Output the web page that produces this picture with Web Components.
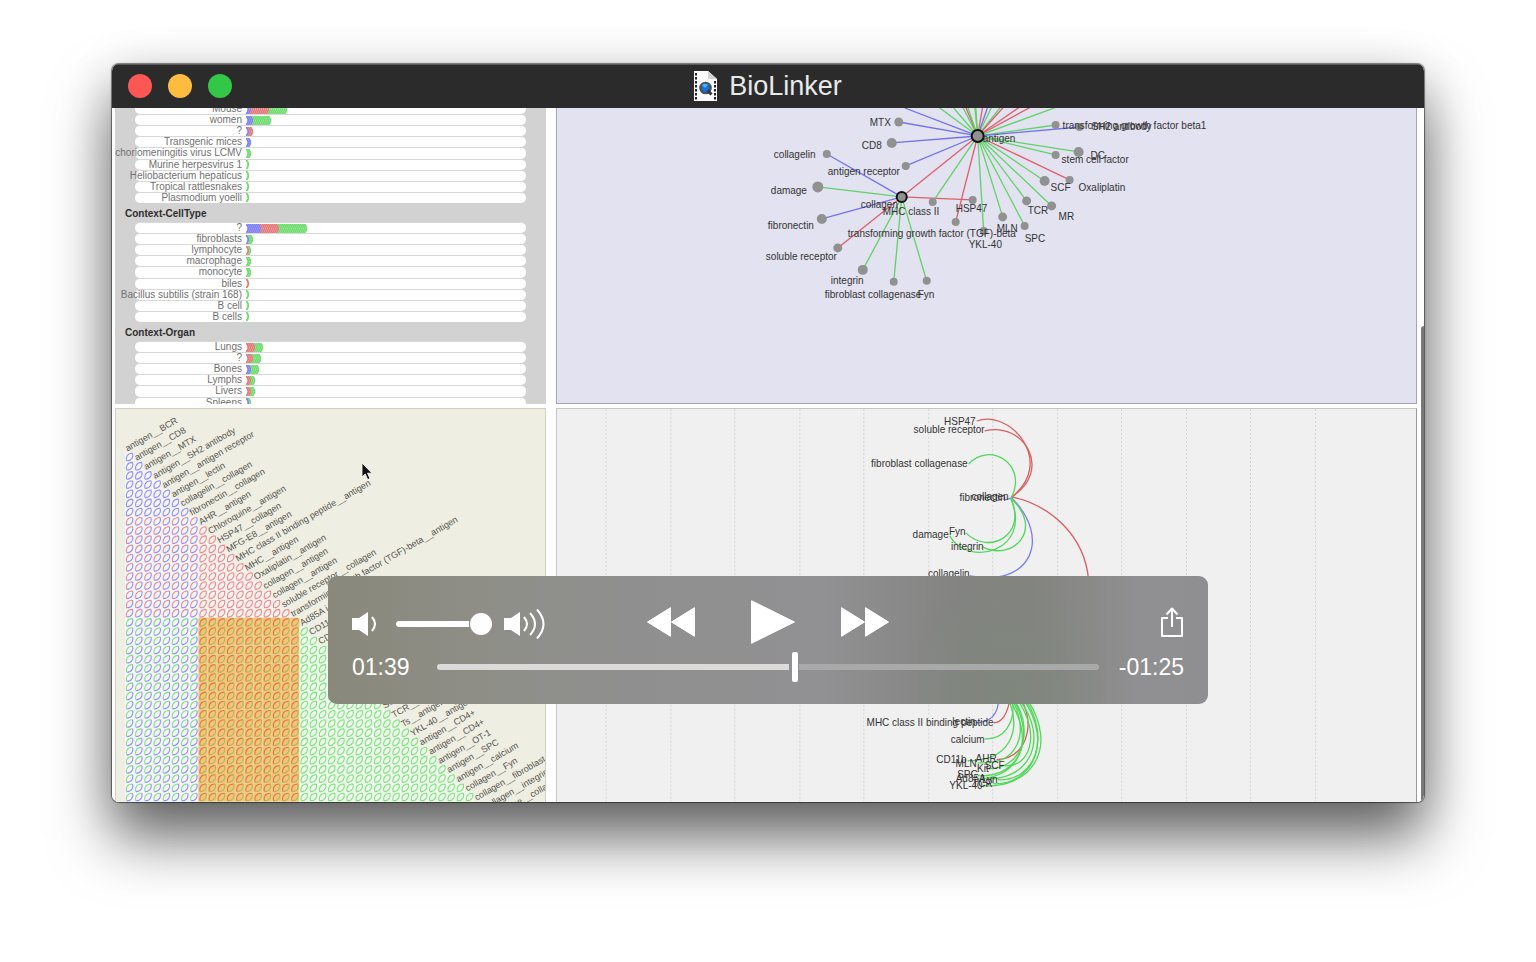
<!DOCTYPE html>
<html lang="en">
<head>
<meta charset="utf-8">
<title>BioLinker</title>
<style>
  html, body { margin: 0; background: #fff; }
  body { font-family: "Liberation Sans", Arial, sans-serif; padding: 64px 112px 160px; }
</style>
</head>
<body>
<player-window heading="BioLinker">
  <context-bars></context-bars>
  <relation-network></relation-network>
  <relation-matrix></relation-matrix>
  <arc-diagram></arc-diagram>
  <playback-bar slot="controls"></playback-bar>
</player-window>

<template id="window-template">
  <style>
    :host { display: block; border-radius: 7px; box-shadow: 0 0 1px 1px rgba(0,0,0,.5), 0 36px 60px rgba(0,0,0,.58), 0 8px 50px rgba(0,0,0,.14); }
    .frame { border-radius: 7px; overflow: hidden; background: #fff; }
    header { display: grid; grid-template-columns: 1fr auto 1fr; align-items: center; height: 44px; padding: 0 16px; background: #2b2b2c; box-shadow: inset 0 1px #5a5a5b; }
    .lights { display: flex; gap: 16px; }
    .lights button { width: 24px; height: 24px; padding: 0; border: 0; border-radius: 50%; }
    .close { background: #fc5753; } .min { background: #fdbc40; } .max { background: #33c748; }
    .title { display: flex; align-items: center; gap: 12px; }
    h1 { margin: 0; font-size: 27px; line-height: 32px; font-weight: 400; color: #e9e9ea; }
    main { position: relative; }
    .panels { position: relative; display: grid; grid-template-columns: 1fr 2fr; grid-template-rows: 296px 394px; gap: 4px 10px; padding: 0 7px 0 3px; }
    .thumb { position: absolute; right: 0; top: 218px; bottom: 0; width: 3px; border-radius: 3px 0 0 0; background: #787878; }
    ::slotted([slot=controls]) { position: absolute; left: 216px; right: 216px; bottom: 98px; }
  </style>
  <div class="frame">
    <header>
      <div class="lights">
        <button class="close" aria-label="Close"></button>
        <button class="min" aria-label="Minimize"></button>
        <button class="max" aria-label="Full screen"></button>
      </div>
      <div class="title">
        <svg width="23" height="30" viewBox="0 0 23 30" aria-hidden="true">
          <path d="M0 0H14L23 8V30H0Z" fill="#fbfbfb"/>
          <path d="M14 0V8H23Z" fill="#d4d4d4"/>
          <path d="M2 2V29" stroke="#222" stroke-width="2" stroke-dasharray="2.4 1.6"/>
          <path d="M21 10V29" stroke="#222" stroke-width="2" stroke-dasharray="2.4 1.6"/>
          <circle cx="11.5" cy="17" r="5" fill="#1272e0" stroke="#4b515b" stroke-width="2.6"/>
          <path d="M8 14Q11 11.500 14 14L11 17Z" fill="#49b4ff"/>
          <path d="M13.500 19.500L17.500 23.500" stroke="#33363c" stroke-width="3"/>
        </svg>
        <h1></h1>
      </div>
    </header>
    <main>
      <div class="panels"><slot></slot><div class="thumb"></div></div>
      <slot name="controls"></slot>
    </main>
  </div>
</template>

<template id="context-template">
  <style>
    :host { display: block; overflow: hidden; background: #d2d2d2; color: #717171; font-size: 10px; }
    .list { margin-top: -5px; }
    h2 { margin: 0; padding: 2px 0 0 10px; font-size: 10px; line-height: 17px; color: #2e2e2e; }
    .group { display: grid; grid-template-columns: minmax(0, 1fr); grid-auto-rows: 1fr; height: 100px; margin: 0 20px; }
    .row { display: flex; align-items: center; gap: 4px; box-sizing: border-box; min-height: 0; border: solid #d8d8d8; border-width: 1px 0 0; border-radius: 5px; background: #fff; }
    .row span { display: flex; justify-content: flex-end; flex: none; width: 107px; white-space: nowrap; line-height: 10px; }
    svg { display: block; flex: 1; width: 0; height: 9px; min-width: 0; }
  </style>
  <div class="list"></div>
</template>

<template id="playback-template">
  <style>
    :host { display: block; }
    .bar { display: flex; flex-direction: column; gap: 8px; height: 128px; box-sizing: border-box; padding: 24px 24px 22px; border-radius: 9px; color: #fff;
      background: radial-gradient(ellipse 110px 120px at 77% 90%, rgba(126,136,124,.8), rgba(126,130,124,0)), linear-gradient(90deg, #89887b 0%, #8f8f89 20%, #8f8f8f 34%, #919193 56%, #838381 72%, #838480 80%, #908f91 92%, #8f8e90 100%); }
    .row { display: grid; grid-template-columns: 1fr auto 1fr; align-items: center; height: 44px; }
    .volume { display: flex; align-items: center; gap: 12px; padding-top: 4px; }
    .volume label { display: flex; width: 32px; }
    .transport { display: flex; align-items: center; gap: 45px; }
    button { display: flex; padding: 0; border: 0; background: none; color: inherit; }
    .share { justify-self: end; }
    svg { display: block; }
    .seek { display: flex; align-items: center; height: 30px; }
    time { font-size: 23px; line-height: 30px; }
    input { appearance: none; margin: 0; background: none; }
    #volume { width: 96px; height: 24px; }
    #volume::-webkit-slider-runnable-track { height: 6px; border-radius: 3px; background: linear-gradient(90deg, #fff 73px, transparent 73px); }
    #volume::-webkit-slider-thumb { appearance: none; width: 22px; height: 22px; margin-top: -8px; border-radius: 50%; background: #fff; }
    #seek { flex: 1; min-width: 0; height: 30px; margin: 0 20px 0 27px; }
    #seek::-webkit-slider-runnable-track { height: 6px; border-radius: 3px; background: linear-gradient(90deg, #dcdbd9 calc(54% - 5px), transparent calc(54% - 5px), transparent calc(54% + 5px), #a9a9a9 calc(54% + 5px)); }
    #seek::-webkit-slider-thumb { appearance: none; width: 6px; height: 30px; margin-top: -12px; border-radius: 2px; background: #fff; }
  </style>
  <div class="bar">
    <div class="row">
      <div class="volume">
        <label for="volume" aria-label="Volume"><svg width="32" height="30" viewBox="0 0 32 30" fill="#fff" aria-hidden="true"><path d="M0 9H7L16 3V27L7 21H0Z"/><path d="M20 8Q26 15 20 22" fill="none" stroke="#fff" stroke-width="2"/></svg></label>
        <input id="volume" type="range" min="0" max="100" value="100">
        <svg width="42" height="30" viewBox="0 0 42 30" fill="#fff" aria-hidden="true"><path d="M0 9H7L16 3V27L7 21H0Z"/><g fill="none" stroke="#fff" stroke-width="2"><path d="M20 8Q26 15 20 22"/><path d="M26 4Q36 15 26 26"/><path d="M33 0.500Q46 15 33 29.500"/></g></svg>
      </div>
      <div class="transport">
        <button aria-label="Rewind"><svg width="48" height="30" viewBox="0 0 48 30" fill="#fff" stroke="#fff" stroke-linejoin="round"><path d="M.5 15L23.500 .7V29.300ZM24.500 15L47.500 .7V29.300Z"/></svg></button>
        <button aria-label="Play"><svg width="56" height="44" viewBox="0 0 56 44" fill="#fff" stroke="#fff" stroke-linejoin="round"><path d="M11.500 .7L54.500 22L11.500 43.300Z"/></svg></button>
        <button aria-label="Fast forward"><svg width="48" height="30" viewBox="0 0 48 30" fill="#fff" stroke="#fff" stroke-linejoin="round"><path d="M.5 .7L23.500 15L.5 29.300ZM24.500 .7L47.500 15L24.500 29.300Z"/></svg></button>
      </div>
      <button class="share" aria-label="Share"><svg width="24" height="31" viewBox="0 0 24 31" fill="none" stroke="#fff" stroke-width="2" stroke-linejoin="round"><path d="M8 11H2V29H22V11H16M12 20V2M6.500 7.500L12 1.500L17.500 7.500"/></svg></button>
    </div>
    <div class="seek">
      <time>01:39</time>
      <input id="seek" type="range" min="0" max="1000" value="541" aria-label="Position">
      <time>-01:25</time>
    </div>
  </div>
</template>

<script>
const BLUE = '#8080f4', RED = '#e57b78', GREEN = '#6fdd6f';

function fromTemplate(host, id) {
  const root = host.attachShadow({ mode: 'open' });
  root.append(document.getElementById(id).content.cloneNode(true));
  return root;
}

class PlayerWindow extends HTMLElement {
  constructor() {
    super();
    fromTemplate(this, 'window-template').querySelector('h1').textContent = this.getAttribute('heading');
  }
}

class ContextBars extends HTMLElement {
  // Each row: label, then the number of blue, red and green relations.
  static groups = [
    ['', [['Mouse', 2, 9, 9], ['women', 3, 0, 9], ['?', 1, 2, 0], ['Transgenic mices', 2, 0, 0],
      ['choriomeningitis virus LCMV', 0, 0, 2], ['Murine herpesvirus 1', 0, 0, 1], ['Heliobacterium hepaticus', 0, 0, 1],
      ['Tropical rattlesnakes', 0, 0, 1], ['Plasmodium yoelli', 0, 0, 1]]],
    ['Context-CellType', [['?', 7, 9, 14], ['fibroblasts', 1, 0, 2], ['lymphocyte', 0, 1, 1], ['macrophage', 0, 0, 2],
      ['monocyte', 0, 0, 2], ['biles', 0, 1, 0], ['Bacillus subtilis (strain 168)', 0, 0, 1], ['B cell', 0, 0, 1], ['B cells', 0, 0, 1]]],
    ['Context-Organ', [['Lungs', 0, 4, 4], ['?', 0, 3, 4], ['Bones', 2, 0, 4], ['Lymphs', 0, 2, 2], ['Livers', 0, 2, 2],
      ['Spleens', 1, 0, 1], ['', 0, 0, 0], ['', 0, 0, 0], ['', 0, 0, 0]]]
  ];
  constructor() {
    super();
    const list = fromTemplate(this, 'context-template').querySelector('.list');
    list.innerHTML = ContextBars.groups.map(([name, rows]) =>
      (name ? `<h2>${name}</h2>` : '') + '<div class="group">' + rows.map(([label, b, r, g]) => {
        const colors = [...Array(b).fill(BLUE), ...Array(r).fill(RED), ...Array(g).fill(GREEN)];
        const arcs = colors.map((c, i) => `<path d="M${i * 2} 0C${i * 2 + 3} 2 ${i * 2 + 3} 7 ${i * 2} 9" stroke="${c}"/>`).join('');
        return `<div class="row"><span>${label}</span><svg fill="none" stroke-width="1.800" aria-hidden="true">${arcs}</svg></div>`;
      }).join('') + '</div>').join('');
  }
}

const SVG_STYLE = 'svg{display:block;width:100%;height:100%}text{font-family:"Liberation Sans",Arial,sans-serif;font-size:10px;fill:#333}';

class RelationNetwork extends HTMLElement {
  // Node: x, y, radius, hub, link colour, label, label x, label y (baseline).
  static nodes = [
    [899,122,4.5,'a','b','MTX',870,126],[892,143,5,'a','b','CD8',862,149],[906,166,4,'a','b','antigen receptor',828,175],
    [827,154,4,'c','b','collagelin',774,158],[818,187,5.5,'c','g','damage',771,194],[822,219,5,'c','b','fibronectin',768,229],
    [838,248,4.5,'c','r','soluble receptor',766,260],[863,270,5,'c','g','integrin',831,284],[894,282,4,'c','g','fibroblast collagenase',825,298],
    [927,281,4,'c','g','Fyn',918,298],[973,200,4,'c','r','HSP47',956,212],[933,202,4,'a','g','MHC class II',883,215],
    [956,222,4,'a','r','transforming growth factor (TGF)-beta',848,237],[984,231,4,'a','g','YKL-40',969,248],
    [1003,217,4.5,'a','g','MLN',997,232],[1025,226,4,'a','g','SPC',1025,242],[1027,201,4.5,'a','g','TCR',1028,214],
    [1052,206,4.5,'a','g','MR',1059,220],[1045,181,5,'a','g','SCF',1051,191],[1070,180,4,'a','r','Oxaliplatin',1079,191],
    [1056,155,4,'a','g','stem cell factor',1062,163],[1079,152,5,'a','g','DC',1091,159],
    [1056,125,4,'a','g','transforming growth factor beta1',1063,129],[1080,127,4,'a','b','SH2 antibody',1092,130]
  ];
  constructor() {
    super();
    const root = this.attachShadow({ mode: 'open' });
    const hub = { a: [978, 136], c: [902, 197] }, color = { b: '#7272f0', r: '#dc6068', g: '#60d268' };
    const line = (x1, y1, x2, y2, c) => `<path d="M${x1} ${y1}L${x2} ${y2}" stroke="${color[c]}"/>`;
    const beyond = [[905,'b',108],[940,'g',108],[954,'g',108],[963,'g',107],[966,'r',107],[968,'g',107],[975,'g',106],[976,'g',106],[983,'r',107],[988,'b',107],[992,'g',107],[1001,'g',107],[1004,'r',107],[1020,'r',107],[1033,'r',106],[1060,'g',106]];
    const links = RelationNetwork.nodes.map(n => line(...hub[n[3]], n[0], n[1], n[4])).join('')
      + beyond.map(([x, c, y]) => line(...hub.a, x, y, c)).join('') + line(...hub.a, ...hub.c, 'r');
    const dots = RelationNetwork.nodes.map(n => `<circle cx="${n[0]}" cy="${n[1]}" r="${n[2]}" fill="#919191"/>`).join('');
    const labels = RelationNetwork.nodes.map(n => `<text x="${n[6]}" y="${n[7]}">${n[5]}</text>`).join('');
    root.innerHTML = `<style>:host{display:block;overflow:hidden;box-sizing:border-box;background:#e2e2f0;border:solid #a5a6b4;border-width:0 1px 1px}${SVG_STYLE}</style>
      <svg viewBox="557 108 860 295" preserveAspectRatio="xMidYMin meet"><g stroke-width="1.300">${links}</g>${dots}
      <g fill="#919191" stroke="#111" stroke-width="2"><circle cx="978" cy="136" r="6"/><circle cx="902" cy="197" r="5"/></g>
      ${labels}<text x="983" y="142">antigen</text><text x="861" y="208">collagen</text></svg>`;
  }
}

class RelationMatrix extends HTMLElement {
  static labels = ['antigen__BCR','antigen__CD8','antigen__MTX','antigen__SH2 antibody','antigen__antigen receptor','antigen__lectin',
    'collagelin__collagen','fibronectin__collagen','AHR__antigen','Chloroquine__antigen','HSP47__collagen','MFG-E8__antigen',
    'MHC class II binding peptide__antigen','MHC__antigen','Oxaliplatin__antigen','collagen__antigen','collagen__antigen',
    'soluble receptor__collagen','transforming growth factor (TGF)-beta__antigen','Ad85A i','CD11b','CD4','','','','','','',
    'SCF__','TCR__antigen','Ts__antigen','YKL-40__antigen','antigen__CD4+','antigen__CD4+','antigen__OT-1','antigen__SPC',
    'antigen__calcium','collagen__Fyn','collagen__fibroblast','collagen__integrin','damage__collagen'];
  constructor() {
    super();
    const root = this.attachShadow({ mode: 'open' });
    const pitch = 340 / 37, kind = i => i < 8 ? BLUE : i < 19 ? RED : GREEN;
    const strokes = { [BLUE]: '', [RED]: '', [GREEN]: '' }, tint = { [BLUE]: '#f5f5fb', [RED]: '#fbf2f0', [GREEN]: '#eefaec' };
    let cells = '', warm = '', warmGreen = '', n = v => Math.round(v * 10) / 10;
    for (let r = 0; r < 38; r++) for (let c = 0; c <= r; c++) {
      const x = n(129.5 + c * pitch), y = n(457 + r * pitch), row = kind(r + 1), col = kind(c);
      const hot = row === GREEN && col === RED;
      cells += `<rect x="${n(x - 4.6)}" y="${n(y - 4.6)}" width="9.200" height="9.200" fill="${hot ? '#f2c67a' : tint[col]}"/>`;
      const upper = `M${n(x - 2.8)} ${n(y + 3.8)}c-1-3.200 .4-7.700 5.800-7.600`, lower = `M${n(x + 3)} ${n(y - 3.8)}c1 3.200-.4 7.700-5.800 7.600`;
      if (hot) { warm += upper; warmGreen += lower; } else { strokes[row] += upper; strokes[col] += lower; }
    }
    const paths = Object.entries(strokes).map(([c, d]) => `<path d="${d}" stroke="${c}"/>`).join('');
    const texts = RelationMatrix.labels.map((t, i) => t && `<text transform="translate(${n(127.5 + i * pitch)} ${n(451.5 + i * pitch)}) rotate(-30)">${t}</text>`).join('');
    root.innerHTML = `<style>:host{display:block;overflow:hidden;box-sizing:border-box;background:#efeee2;border:solid #cfcfc6;border-width:1px 1px 0}${SVG_STYLE}text{font-size:9px;fill:#55554f}</style>
      <svg viewBox="116 409 429 393" preserveAspectRatio="xMinYMin slice">${cells}
      <g fill="none" stroke-width="1.100" stroke-opacity=".85">${paths}<path d="${warm}" stroke="#e0653a"/><path d="${warmGreen}" stroke="#a8b452"/></g>${texts}
      <path d="M362 463V477L365.200 474L367.700 479.500L370 478.500L367.500 473.200H372Z" fill="#111" stroke="#fff" stroke-width=".8"/></svg>`;
  }
}

class ArcDiagram extends HTMLElement {
  static labels = [['HSP47',976,425],['soluble receptor',985,433],['fibroblast collagenase',968,467],['fibronectin',1006,501],['collagen',1009,500],
    ['damage',949,538],['Fyn',966,535],['integrin',984,550],['collagelin',970,577],['lectin',976,725],['MHC class II binding peptide',994,726],
    ['calcium',985,743],['CD11b',967,763],['AHR',997,762],['MLN',977,767],['Kit',989,772],['SCF',1005,769],['SPC',978,778],
    ['Ad85A',986,782],['Lyn',998,783],['TCR',993,787],['YKL-40',983,789]];
  static arcs = [
    ['r','M977 421C1012 409 1056 463 1012 497'],['r','M985 431C1024 421 1054 470 1012 497'],['g','M969 464C990 441 1028 464 1012 497'],
    ['r','M1012 497C1050 505 1085 535 1089 580'],['b','M1005 500L1012 498C1052 538 1032 588 970 576'],['g','M966 533C990 556 1028 535 1011 498'],
    ['g','M950 536C968 568 1034 552 1011 498'],['g','M983 547C1012 562 1046 530 1011 498'],
    ['b','M999 700C998 717 989 723 976 723'],['r','M1010 700C1008 714 1002 723 994 723'],['g','M1013 700C1016 724 1004 740 985 739'],
    ['g','M1009 700C1022 732 1010 761 968 761'],['r','M1022 700C1036 728 1026 758 997 760'],['g','M1013 700C1030 735 1018 766 978 763'],
    ['g','M1015 700C1036 735 1020 770 988 769'],['g','M1018 700C1042 735 1030 768 1005 766'],['g','M1014 700C1036 740 1020 778 978 776'],
    ['g','M1020 700C1050 740 1030 781 986 779'],['g','M1026 700C1052 740 1034 782 998 780'],['g','M1024 700C1055 745 1030 786 993 784'],
    ['g','M1028 700C1060 750 1030 789 983 786'],['g','M1010 700C1038 745 1016 778 980 779']];
  constructor() {
    super();
    const root = this.attachShadow({ mode: 'open' });
    const color = { b: '#7b7bee', r: '#d65f5f', g: '#50d85a' };
    let grid = '';
    for (let i = 0; i < 12; i++) grid += `M${606 + Math.round(i * 64.5)} 409V802`;
    const arcs = ArcDiagram.arcs.map(([c, d]) => `<path d="${d}" stroke="${color[c]}"/>`).join('');
    const texts = ArcDiagram.labels.map(([t, x, y]) => `<text x="${x}" y="${y}" text-anchor="end">${t}</text>`).join('');
    root.innerHTML = `<style>:host{display:block;overflow:hidden;box-sizing:border-box;background:#f0f0f0;border:1px solid #c6c6c6;border-bottom:0;border-right-color:#999}${SVG_STYLE}</style>
      <svg viewBox="557 409 860 393" preserveAspectRatio="xMidYMin meet"><path d="${grid}" stroke="#d5d5d5" stroke-dasharray="2 2"/>
      <g fill="none" stroke-width="1.300">${arcs}</g>${texts}</svg>`;
  }
}

class PlaybackBar extends HTMLElement {
  constructor() { super(); fromTemplate(this, 'playback-template'); }
}

customElements.define('player-window', PlayerWindow);
customElements.define('context-bars', ContextBars);
customElements.define('relation-network', RelationNetwork);
customElements.define('relation-matrix', RelationMatrix);
customElements.define('arc-diagram', ArcDiagram);
customElements.define('playback-bar', PlaybackBar);
</script>
</body>
</html>
